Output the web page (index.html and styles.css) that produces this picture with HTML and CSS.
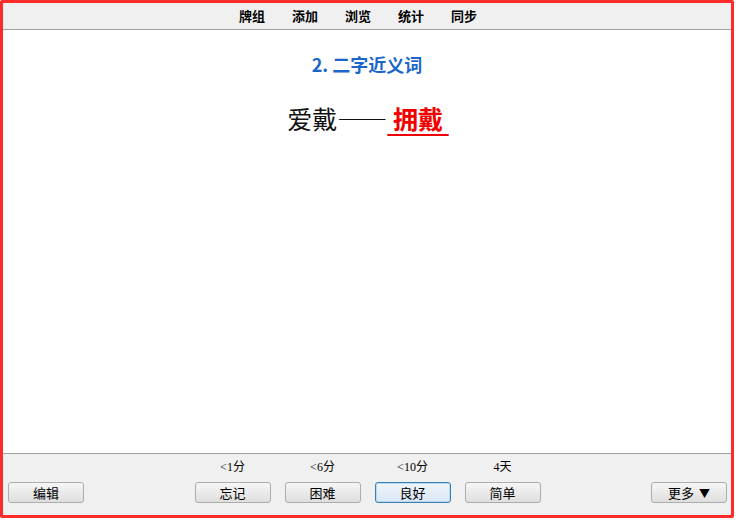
FILE: index.html
```html
<!DOCTYPE html>
<html lang="zh-CN">
<head>
  <meta charset="UTF-8" />
  <meta name="viewport" content="width=device-width, initial-scale=1" />
  <title>Anki - 复习</title>
  <link rel="stylesheet" href="styles.css">
</head>
<body>
  <div class="window">
    <nav class="toolbar">
      <a href="#">牌组</a>
      <a href="#">添加</a>
      <a href="#">浏览</a>
      <a href="#">统计</a>
      <a href="#">同步</a>
    </nav>

    <main class="card">
      <div class="card-title">2. 二字近义词</div>
      <div class="card-line">爱戴——<span class="cloze">&nbsp;拥戴&nbsp;</span></div>
    </main>

    <footer class="bottom-bar">
      <div class="side side-left">
        <button class="btn">编辑</button>
      </div>
      <div class="answers">
        <div class="answer">
          <span class="due">&lt;1分</span>
          <button class="btn">忘记</button>
        </div>
        <div class="answer">
          <span class="due">&lt;6分</span>
          <button class="btn">困难</button>
        </div>
        <div class="answer">
          <span class="due">&lt;10分</span>
          <button class="btn focused">良好</button>
        </div>
        <div class="answer">
          <span class="due">4天</span>
          <button class="btn">简单</button>
        </div>
      </div>
      <div class="side side-right">
        <button class="btn">更多 <span class="arrow">▼</span></button>
      </div>
    </footer>
  </div>
</body>
</html>
```

FILE: styles.css
```css
html, body {
  margin: 0;
  padding: 0;
  background: #fff;
  font-family: "Noto Sans CJK SC", "Noto Sans", sans-serif;
}

.window {
  width: 734px;
  height: 518px;
  box-sizing: border-box;
  border: 3px solid #ff2a2a;
  border-radius: 2px;
  display: flex;
  flex-direction: column;
  overflow: hidden;
}

/* 顶部菜单 */
.toolbar {
  height: 26px;
  background: #f0f0f0;
  border-bottom: 1px solid #a0a0a0;
  display: flex;
  justify-content: center;
  align-items: center;
  gap: 27px;
  padding-right: 18px;
}

.toolbar a {
  color: #000;
  text-decoration: none;
  font-size: 13px;
  font-weight: bold;
  line-height: 16px;
}

/* 卡片内容 */
.card {
  flex: 1;
  background: #fff;
  text-align: center;
  padding-top: 23px;
}

.card-title {
  color: #1a66cc;
  font-size: 18px;
  font-weight: bold;
  line-height: 22px;
}

.card-line {
  margin-top: 28px;
  font-size: 25px;
  line-height: 30px;
  color: #111;
  padding-left: 2px;
}

.cloze {
  color: #f20000;
  font-weight: bold;
  text-decoration: underline;
  text-decoration-thickness: 2px;
  text-underline-offset: 5px;
}

/* 底部按钮栏 */
.bottom-bar {
  height: 62px;
  background: #f0f0f0;
  border-top: 1px solid #a0a0a0;
  display: grid;
  grid-template-columns: 1fr auto 1fr;
  padding: 0 4px 12px 5px;
  box-sizing: border-box;
}

.side {
  display: flex;
  align-items: flex-end;
}

.side-right {
  justify-content: flex-end;
}

.answers {
  display: flex;
  gap: 14px;
  align-items: flex-end;
}

.answer {
  display: flex;
  flex-direction: column;
  align-items: center;
  gap: 8px;
}

.due {
  font-family: "Liberation Serif", "Noto Sans CJK SC", serif;
  font-size: 12px;
  line-height: 14px;
  color: #000;
}

.btn {
  width: 76px;
  height: 21px;
  padding: 0;
  border: 1px solid #adadad;
  border-radius: 3px;
  background: linear-gradient(to bottom, #f6f6f6, #dedede);
  font-family: "Noto Sans CJK SC", "Noto Sans", sans-serif;
  font-size: 13px;
  line-height: 17px;
  color: #000;
  cursor: pointer;
}

.btn .arrow {
  font-size: 11px;
  margin-left: 2px;
}

.btn.focused {
  border-color: #3c7fb1;
  box-shadow: inset 0 0 0 1px #b9d8f0;
  background: linear-gradient(to bottom, #eef5fb, #d9e8f5);
}
```
